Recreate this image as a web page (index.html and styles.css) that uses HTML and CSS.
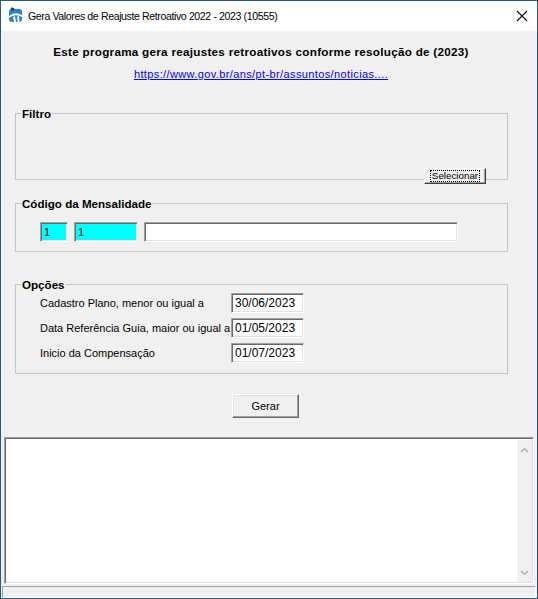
FILE: index.html
```html
<!DOCTYPE html>
<html lang="pt-BR">
<head>
<meta charset="utf-8">
<title>Gera Valores de Reajuste Retroativo</title>
<link rel="stylesheet" href="styles.css">
</head>
<body>
<div class="window">
  <div class="titlebar">
    <svg class="app-icon" width="16" height="16" viewBox="0 0 16 16">
      <path d="M2 5 Q2 2 5 2 L12 2 Q15 2 15 5 L15 12 Q15 15 12 15 L5 15 Q2 15 2 12 Z" fill="#2f7fc8"/>
      <path d="M2 9 Q8 4 15 8 L15 10 Q8 6 2 11 Z" fill="#ffffff"/>
      <path d="M4 0.5 Q7 0 8 2.5 L5 4 Q3 3 4 0.5 Z" fill="#1d3f74"/>
      <path d="M6 10 L8 9 L9 15 L7 15 Z" fill="#ffffff"/>
      <path d="M10 9.5 L12 9 L12.5 15 L10.5 15 Z" fill="#ffffff"/>
    </svg>
    <span class="title">Gera Valores de Reajuste Retroativo 2022 - 2023 (10555)</span>
    <svg class="close" width="12" height="12" viewBox="0 0 12 12">
      <path d="M1 1 L11 11 M11 1 L1 11" stroke="#111" stroke-width="1.1" fill="none"/>
    </svg>
  </div>
  <div class="client">
    <div class="intro">
      <div class="heading">Este programa gera reajustes retroativos conforme resolução de (2023)</div>
      <a class="link" href="#">https://www.gov.br/ans/pt-br/assuntos/noticias....</a>
    </div>

    <div class="group group-filtro">
      <span class="group-title">Filtro</span>
      <button class="btn-small"><span class="focus">Selecionar</span></button>
    </div>

    <div class="group group-codigo">
      <span class="group-title">Código da Mensalidade</span>
      <div class="code-row">
        <div class="edit cyan code-a">1</div>
        <div class="edit cyan code-b">1</div>
        <div class="edit code-c"></div>
      </div>
    </div>

    <div class="group group-opcoes">
      <span class="group-title">Opções</span>
      <div class="opt-row">
        <span class="opt-label">Cadastro Plano, menor ou igual a</span>
        <div class="edit date">30/06/2023</div>
      </div>
      <div class="opt-row">
        <span class="opt-label">Data Referência Guia, maior ou igual a</span>
        <div class="edit date">01/05/2023</div>
      </div>
      <div class="opt-row">
        <span class="opt-label">Inicio da Compensação</span>
        <div class="edit date">01/07/2023</div>
      </div>
    </div>

    <div class="actions">
      <button class="btn">Gerar</button>
    </div>

    <div class="memo">
      <div class="memo-body"></div>
      <div class="vscroll">
        <svg width="9" height="6" viewBox="0 0 9 6"><path d="M1 5 L4.5 1.5 L8 5" stroke="#a8a8a8" stroke-width="1.2" fill="none"/></svg>
        <svg width="9" height="6" viewBox="0 0 9 6"><path d="M1 1 L4.5 4.5 L8 1" stroke="#a8a8a8" stroke-width="1.2" fill="none"/></svg>
      </div>
    </div>

    <div class="statusbar"></div>
  </div>
</div>
</body>
</html>
```

FILE: styles.css
```css
* { box-sizing: border-box; }

html, body {
  margin: 0;
  padding: 0;
  background: #f0f0f0;
}

body {
  font-family: "Liberation Sans", Arial, sans-serif;
  font-size: 11px;
  color: #000;
}

.window {
  width: 538px;
  height: 599px;
  border: 1px solid #2b5877;
  display: flex;
  flex-direction: column;
  background: #f0f0f0;
}

.titlebar {
  height: 30px;
  background: #fff;
  display: flex;
  align-items: center;
  padding-left: 6px;
  padding-right: 9px;
}

.app-icon {
  flex: none;
  margin-top: -2px;
}

.title {
  margin-left: 5px;
  font-family: "Liberation Sans", Arial, sans-serif;
  font-size: 10.6px;
  letter-spacing: -0.4px;
  color: #000;
  flex: 1;
  margin-top: -1px;
}

.close {
  flex: none;
}

.client {
  flex: 1;
  display: flex;
  flex-direction: column;
  background: #f0f0f0;
}

.intro {
  padding-top: 10px;
  padding-right: 16px;
  display: flex;
  flex-direction: column;
  align-items: center;
}

.heading {
  font-weight: bold;
  font-size: 11.7px;
  letter-spacing: 0.27px;
  line-height: 22px;
}

.link {
  line-height: 22px;
  color: #0000ff;
  text-decoration: underline;
  letter-spacing: 0.38px;
}

.group {
  position: relative;
  margin-left: 14px;
  width: 493px;
  border: 1px solid #c4c4c4;
  display: flex;
  flex-direction: column;
  align-items: flex-start;
}

.group-title {
  margin-top: -7px;
  margin-left: 5px;
  padding: 0 1px;
  height: 13px;
  line-height: 13px;
  background: #f0f0f0;
  font-weight: bold;
  font-size: 11.6px;
  color: #000;
}

.group-filtro {
  margin-top: 28px;
  height: 67px;
}

.group-codigo {
  margin-top: 23px;
  height: 49px;
}

.group-opcoes {
  margin-top: 32px;
  height: 90px;
}

.btn-small {
  position: absolute;
  left: 408px;
  top: 54px;
  width: 62px;
  height: 16px;
  padding: 0;
  margin: 0;
  background: #f0f0f0;
  border-top: 1px solid #fff;
  border-left: 1px solid #fff;
  border-right: 1px solid #404040;
  border-bottom: 1px solid #404040;
  box-shadow: inset -1px -1px 0 #a0a0a0;
  font-family: "Liberation Sans", Arial, sans-serif;
  font-size: 9.8px;
  color: #000;
  display: flex;
  align-items: center;
  justify-content: center;
}

.focus {
  outline: 1px dotted #000;
  outline-offset: 0;
  padding: 0 1px;
  line-height: 10px;
}

.edit {
  height: 20px;
  background: #fff;
  border-top: 1px solid #a0a0a0;
  border-left: 1px solid #a0a0a0;
  border-right: 1px solid #fff;
  border-bottom: 1px solid #fff;
  box-shadow: inset 1px 1px 0 #696969, inset -1px -1px 0 #e3e3e3;
  padding-left: 3px;
  line-height: 18px;
  font-size: 11px;
}

.cyan {
  background: #00ffff;
}

.code-row {
  margin-top: 12px;
  padding-left: 24px;
  display: flex;
  gap: 6px;
}

.code-a { width: 28px; }
.code-b { width: 64px; }
.code-c { width: 314px; }

.opt-row {
  display: flex;
  align-items: center;
  padding-left: 24px;
  margin-top: 5px;
}

.group-title + .opt-row {
  margin-top: 2px;
}

.opt-label {
  width: 191px;
  white-space: nowrap;
  color: #000;
}

.date {
  width: 73px;
  font-size: 12px;
}

.actions {
  margin-top: 20px;
  padding-left: 231px;
  display: flex;
}

.btn {
  width: 67px;
  height: 24px;
  margin: 0;
  padding: 0;
  background: #f0f0f0;
  border-top: 1px solid #fff;
  border-left: 1px solid #fff;
  border-right: 1px solid #696969;
  border-bottom: 1px solid #696969;
  box-shadow: inset -1px -1px 0 #a0a0a0, inset 1px 1px 0 #e3e3e3;
  font-family: "Liberation Sans", Arial, sans-serif;
  font-size: 11px;
  color: #000;
}

.memo {
  margin-top: 19px;
  margin-left: 3px;
  width: 530px;
  height: 147px;
  background: #fff;
  border-top: 1px solid #a0a0a0;
  border-left: 1px solid #a0a0a0;
  border-right: 1px solid #fff;
  border-bottom: 1px solid #fff;
  box-shadow: inset 1px 1px 0 #696969, inset -1px -1px 0 #e3e3e3;
  display: flex;
  padding: 2px 1px 1px 2px;
}

.memo-body {
  flex: 1;
}

.vscroll {
  width: 15px;
  background: #f0f0f0;
  display: flex;
  flex-direction: column;
  justify-content: space-between;
  align-items: center;
  padding: 7px 0 6px;
}

.statusbar {
  margin-top: 2px;
  margin-left: 1px;
  margin-right: 1px;
  height: 12px;
  border-top: 1px solid #a0a0a0;
  border-left: 1px solid #a0a0a0;
  border-right: 1px solid #fff;
  border-bottom: 1px solid #fff;
}
```
